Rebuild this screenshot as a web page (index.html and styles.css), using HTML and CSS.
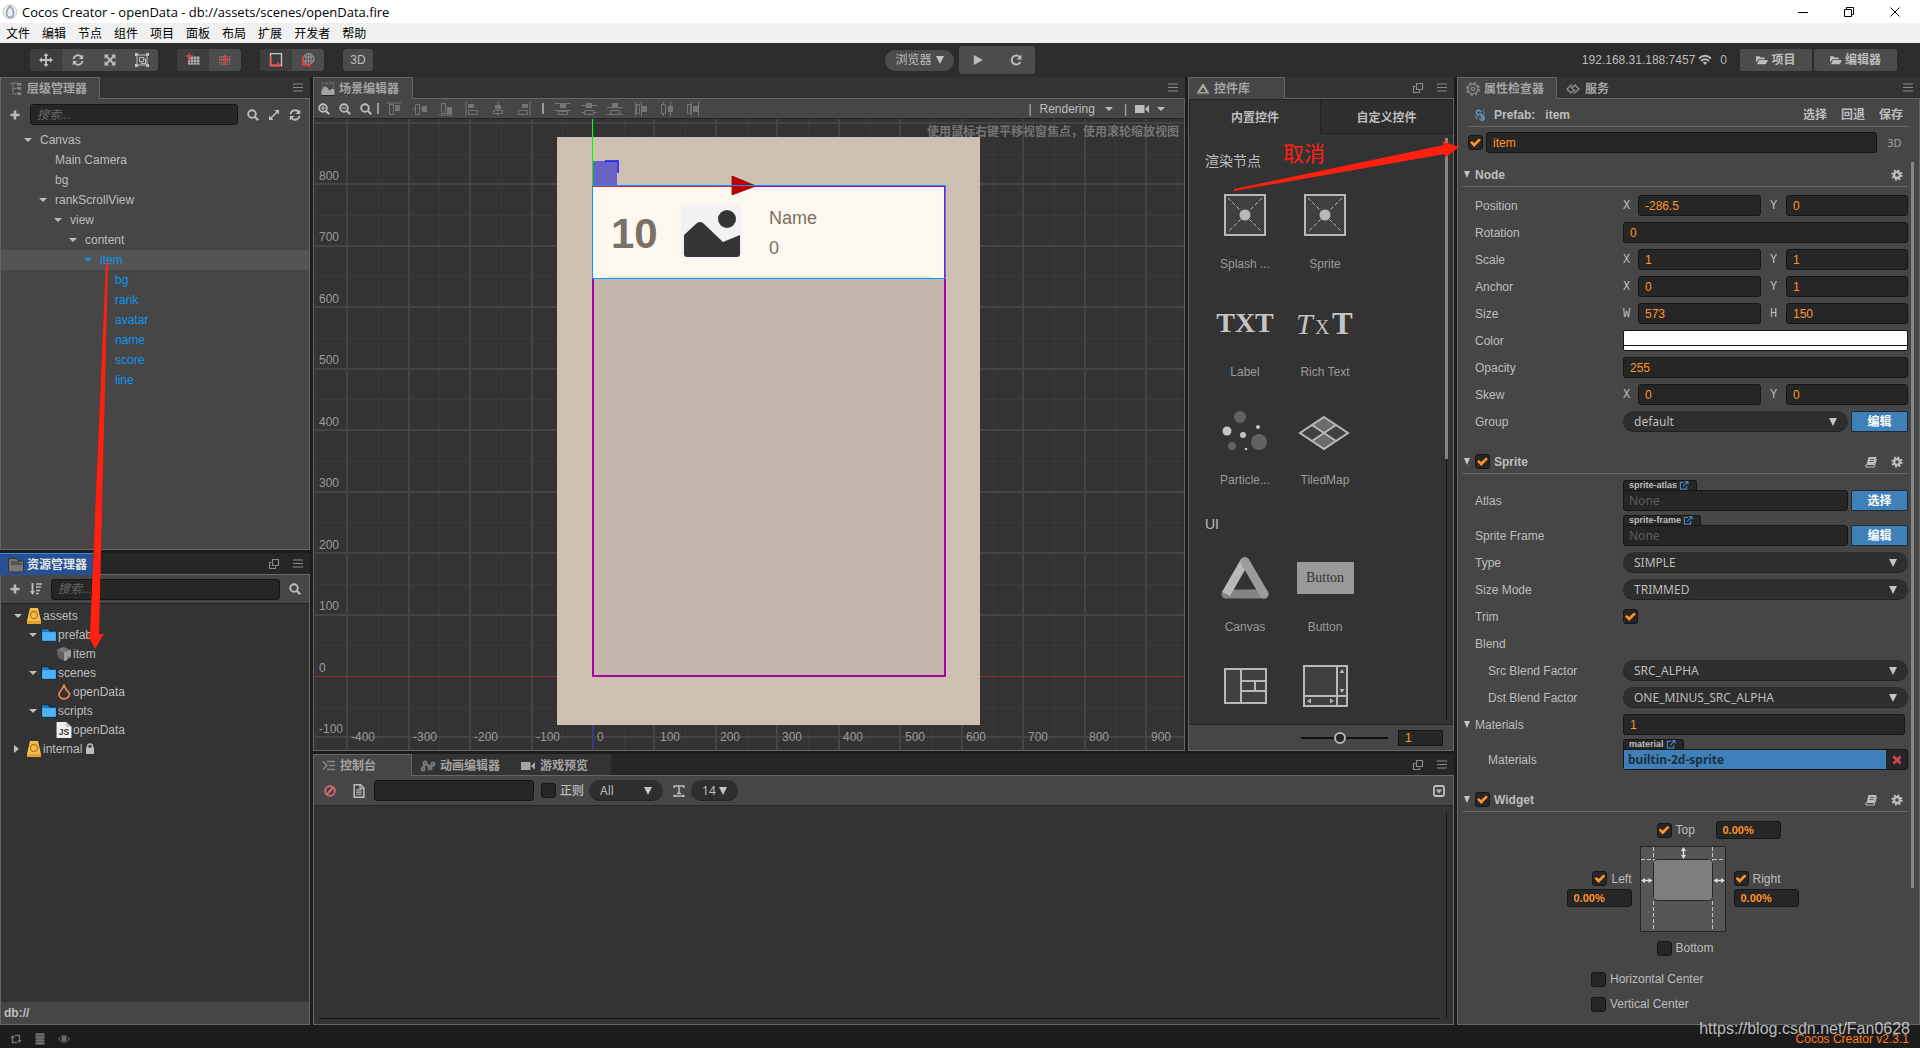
FILE: index.html
```html
<!DOCTYPE html>
<html lang="zh-CN">
<head>
<meta charset="utf-8">
<title>Cocos Creator - openData</title>
<link rel="stylesheet" href="styles.css">
</head>
<body>
<svg class="defs" aria-hidden="true">
  <symbol id="i-menu" viewBox="0 0 12 12"><path d="M1 2h10M1 5.500h10M1 9h10" stroke="currentColor" stroke-width="1"/></symbol>
  <symbol id="i-popout" viewBox="0 0 12 12"><path d="M4.500 1.500h6v6h-6zM3.500 4.500h-2v6h6v-2" fill="none" stroke="currentColor" stroke-width="1.200"/></symbol>
  <symbol id="i-plus" viewBox="0 0 12 12"><path d="M6 1.500v9M1.500 6h9" stroke="currentColor" stroke-width="2.600"/></symbol>
  <symbol id="i-search" viewBox="0 0 12 12"><circle cx="5" cy="5" r="3.800" fill="none" stroke="currentColor" stroke-width="1.900"/><path d="M8 8l3.200 3.200" stroke="currentColor" stroke-width="2.200"/></symbol>
  <symbol id="i-zoomin" viewBox="0 0 12 12"><use href="#i-search"/><path d="M3 5h4M5 3v4" stroke="currentColor" stroke-width="1.200"/></symbol>
  <symbol id="i-zoomout" viewBox="0 0 12 12"><use href="#i-search"/><path d="M3 5h4" stroke="currentColor" stroke-width="1.200"/></symbol>
  <symbol id="i-refresh" viewBox="0 0 12 12"><path d="M1.500 5.200A4.600 4.600 0 0 1 9.600 3M10.500 6.800A4.600 4.600 0 0 1 2.400 9" fill="none" stroke="currentColor" stroke-width="1.800"/><path d="M11.200.5v4.500h-4.500zM.8 11.500V7h4.500z" fill="currentColor"/></symbol>
  <symbol id="i-expand" viewBox="0 0 12 12"><path d="M3 9l6-6" stroke="currentColor" stroke-width="1.600"/><path d="M6.500 1H11v4.500zM1 6.500V11h4.500z" fill="currentColor"/></symbol>
  <symbol id="i-move" viewBox="0 0 12 12"><path d="M6 1.500v9M1.500 6h9" stroke="currentColor" stroke-width="1.600"/><path d="M6 0l2.300 2.600H3.700zM6 12L3.700 9.400h4.600zM0 6l2.600-2.300v4.600zM12 6L9.400 8.300V3.700z" fill="currentColor"/></symbol>
  <symbol id="i-arrows" viewBox="0 0 12 12"><path d="M2 2l8 8M10 2l-8 8" stroke="currentColor" stroke-width="2"/><path d="M.5.5H5L.5 5zM11.500.5V5L7 .5zM.5 11.500V7L5 11.500zM11.500 11.500H7L11.500 7z" fill="currentColor"/></symbol>
  <symbol id="i-rect" viewBox="0 0 14 14"><path d="M2 2h10v10H2z" fill="none" stroke="currentColor"/><path d="M4.500 4.500h4v4h-4zM9 6h1.500v4.500H6V9" fill="none" stroke="currentColor"/><path d="M0 0h3v3H0zM11 0h3v3h-3zM0 11h3v3H0zM11 11h3v3h-3z" fill="currentColor"/></symbol>
  <symbol id="i-anchor" viewBox="0 0 14 14"><path d="M3 5v6M6 3v8M9 3v8M12 3v8M2 5h12M2 8h12M2 11h12" stroke="#c4c4c4" stroke-width="1.200"/><path d="M3 0v8M0 3h7" stroke="#f0403c" stroke-width="1.400"/></symbol>
  <symbol id="i-center" viewBox="0 0 14 14"><path d="M2 3v9M5 3v9M9 3v9M12 3v9M1 4h12M1 7h12M1 10h12" stroke="#858585" stroke-width="1" stroke-dasharray="1 1"/><path d="M7 2v10M2 7h10" stroke="#f0403c" stroke-width="1.600"/></symbol>
  <symbol id="i-local" viewBox="0 0 14 14"><path d="M1.500.5h11v12h-11z" fill="none" stroke="#c4c4c4" stroke-width="1.400"/><path d="M2 3v9h8M8 9.500l3 2.500-3 2" fill="none" stroke="#f0403c" stroke-width="1.500"/></symbol>
  <symbol id="i-global" viewBox="0 0 14 14"><circle cx="7.500" cy="6" r="5.500" fill="none" stroke="#999"/><path d="M2 4h11M2 8h11M7.500.5v11M5 1v10M10 1v10" stroke="#999"/><path d="M2 4v8h6M1 5l2-2M7 10l2 2-2 2" fill="none" stroke="#f0403c" stroke-width="1.500"/></symbol>
  <symbol id="i-play" viewBox="0 0 12 12"><path d="M1 0l11 6-11 6z" fill="currentColor"/></symbol>
  <symbol id="i-reload" viewBox="0 0 12 12"><path d="M9.800 3.200A4.500 4.500 0 1 0 10.300 8" fill="none" stroke="currentColor" stroke-width="2"/><path d="M11.500.5v5h-5z" fill="currentColor"/></symbol>
  <symbol id="i-wifi" viewBox="0 0 14 12"><path d="M1 4.500q6-5.500 12 0M3 7q4-3.500 8 0" fill="none" stroke="currentColor" stroke-width="1.800"/><path d="M4.800 8.600q2.200-1.600 4.400 0L7 11z" fill="currentColor"/></symbol>
  <symbol id="i-folderopen" viewBox="0 0 14 12"><path d="M0 9V1.500h4L5 3h5v2H3zM3.500 6H14l-2.500 5H1z" fill="currentColor"/></symbol>
  <symbol id="i-tree" viewBox="0 0 14 16"><path d="M0 1.500h8M3.500 2v11.500h4M3.500 7.500h4M8 3.500h5M9 8.500h4M9 14.500h4" stroke="#777" stroke-width="1.400" fill="none"/><path d="M8 1h5v2H8zM8 6h5v2H8zM8 12h5v2H8z" fill="#8a8a8a"/></symbol>
  <symbol id="i-scene" viewBox="0 0 14 15"><path d="M0 0h3v3H0zM4 0h3v3H4zM8 0h3v3H8zM11.500 0H14v3h-2.500zM0 4h3v3H0zM11.500 4H14v3h-2.500z" fill="#606060"/><path d="M0 14V9q3-5 5-4t3.500 4.500Q11 6 14 8v6z" fill="#a4a4a4"/><path d="M0 14.500h14" stroke="#222"/></symbol>
  <symbol id="i-assets" viewBox="0 0 16 16"><path d="M.5 14V1.500H8L11 4h4.500v10q0 1-1 1h-13q-1 0-1-1z" fill="#777" stroke="#333"/><path d="M3 5h9M3 7h11" stroke="#333"/></symbol>
  <symbol id="i-tri" viewBox="0 0 12 11"><path d="M6 1.500L10.800 9.500H1.200z" fill="none" stroke="#a8a8a8" stroke-width="2.200" stroke-linejoin="round"/><path d="M1 10h10" stroke="#777" stroke-width="1.500"/></symbol>
  <symbol id="i-gear" viewBox="0 0 14 14"><circle cx="7" cy="7" r="5.400" fill="none" stroke="currentColor" stroke-width="2.400" stroke-dasharray="2.120 2.120"/><circle cx="7" cy="7" r="3.500" fill="none" stroke="currentColor" stroke-width="2.800"/></symbol>
  <symbol id="i-gearline" viewBox="0 0 14 14"><circle cx="7" cy="7" r="6" fill="none" stroke="#888" stroke-width="2" stroke-dasharray="2.350 2.360"/><circle cx="7" cy="7" r="4.800" fill="none" stroke="#888" stroke-width="1.300"/><circle cx="7" cy="7" r="1.700" fill="none" stroke="#888" stroke-width="1.300"/></symbol>
  <symbol id="i-service" viewBox="0 0 16 12"><path d="M7 1.500L2 6l4 4 3-3M9 10.500L14 6 10 2 7 5M6 4l4 4" fill="none" stroke="#8a8a8a" stroke-width="1.500"/></symbol>
  <symbol id="i-console" viewBox="0 0 14 12"><path d="M1 1.500l4 4-4 4" fill="none" stroke="#888" stroke-width="1.500"/><path d="M5 1.500h8M7 5.500h6M5 9.500h8" stroke="#888" stroke-width="1.600"/></symbol>
  <symbol id="i-anim" viewBox="0 0 16 12"><path d="M3 10L5 3l5 4 3-3" stroke="#777" stroke-width="2.500" fill="none"/><circle cx="5" cy="3" r="2.500" fill="#777"/><circle cx="3" cy="9" r="2.500" fill="#777"/><circle cx="10" cy="8" r="2.500" fill="#777"/><circle cx="13" cy="4" r="2.500" fill="#777"/><path d="M4.500 2.500h1v1h-1zM2.500 8.500h1v1h-1zM9.500 7.500h1v1h-1zM12.500 3.500h1v1h-1z" fill="#333"/></symbol>
  <symbol id="i-cam" viewBox="0 0 14 10"><path d="M0 1h9.500v8H0zM10 5l4-4v8z" fill="currentColor"/></symbol>
  <symbol id="i-sort" viewBox="0 0 12 12"><path d="M2.500 0v9" stroke="currentColor" stroke-width="1.800"/><path d="M0 8h5l-2.500 4z" fill="currentColor"/><path d="M6 1h6M6 4h5M6 7.500h4M6 10.500h2.500" stroke="currentColor" stroke-width="1.700"/></symbol>
  <symbol id="i-db" viewBox="0 0 14 16"><path d="M3 0h8l3 13H0z" fill="#f7bd4c"/><path d="M0 13h14v3H0z" fill="#e4a02f"/><circle cx="7" cy="7" r="3.500" fill="none" stroke="#b77a1c" stroke-width="1.300"/></symbol>
  <symbol id="i-folder" viewBox="0 0 14 12"><path d="M.5.5h6l1 2h6v9H.5z" fill="#1f7fc4" stroke="#1b2a38"/><path d="M1 3.500h12v7.500H1z" fill="#4db2fa"/></symbol>
  <symbol id="i-prefab" viewBox="0 0 14 14"><path d="M0 2.500L6.500 0 14 3v7l-6 4-7-4z" fill="#777"/><path d="M7 5.500L14 3v7l-3-1-1 4-3 1z" fill="#9c9c9c"/><path d="M0 3l7 2.500V14l-6-3.500z" fill="#5f5f5f"/></symbol>
  <symbol id="i-fire" viewBox="0 0 12 15"><path d="M6 1Q5 4 2.500 7T2.500 12.500Q6 15.500 9.500 12.500T9.500 7Q7 4 6 1z" fill="none" stroke="#e4824a" stroke-width="1.700"/></symbol>
  <symbol id="i-lock" viewBox="0 0 10 11"><path d="M1 4.500h8V11H1z" fill="currentColor"/><path d="M2.500 5V3.500a2.500 2.500 0 0 1 5 0V5" fill="none" stroke="currentColor" stroke-width="1.500"/></symbol>
  <symbol id="i-ban" viewBox="0 0 12 12"><path d="M9.200 2.800l-6.400 6.400" stroke="#e06a70" stroke-width="1.600"/><circle cx="6" cy="6" r="4.200" fill="none" stroke="#e06a70" stroke-width="1.500"/></symbol>
  <symbol id="i-doc" viewBox="0 0 12 13"><path d="M1.500.7H7.500l3 3v8.600h-9z" fill="none" stroke="currentColor" stroke-width="1.400"/><path d="M3.500 5.500h5M3.500 7.500h5M3.500 9.500h5M7 1v3h3" fill="none" stroke="currentColor" stroke-width="1.100"/></symbol>
  <symbol id="i-type" viewBox="0 0 12 12"><path d="M1.200 3V1h9.600v2M6 1v8M4 8.500h4M1 11h10M2.500 9.800L.8 11l1.700 1.200M9.500 9.800L11.200 11l-1.700 1.200" fill="none" stroke="currentColor" stroke-width="1.500"/></symbol>
  <symbol id="i-collapse" viewBox="0 0 12 12"><rect x="1" y="1" width="10" height="10" rx="1.500" fill="none" stroke="currentColor" stroke-width="1.800"/><path d="M3 4.500h6L6 8.500z" fill="currentColor"/></symbol>
  <symbol id="i-book" viewBox="0 0 12 12"><path d="M3.500 1H11.500L9 9H1.500z" fill="currentColor"/><path d="M1.200 8.500q-1 2.300.8 2.500H9l2.500-8" fill="none" stroke="currentColor" stroke-width="1.200"/><path d="M5 3.500h4M4.500 5.500h4" stroke="#464646" stroke-width=".8"/></symbol>
  <symbol id="i-link" viewBox="0 0 12 12"><path d="M5.500 4.500L8 7a1.800 1.800 0 0 0 2.500 2.500M5 7L3 5a2 2 0 0 1 0-3 2 2 0 0 1 3 0l1 1M7 5l2.500 2.500a2 2 0 0 1-3 3L5.500 9.500" fill="none" stroke="#5a9bd4" stroke-width="1.500"/><path d="M8.500 2.500l1.500-1.500M9 4h2M3.500 8.500L2 10M1 8h2" stroke="#5a9bd4"/></symbol>
  <symbol id="i-ext" viewBox="0 0 10 10"><path d="M5 1.500H1v7.500h7V5.500M4 6l4.500-4.500" fill="none" stroke="#3f86c4" stroke-width="1.200"/><path d="M5.500 0H10v4.500z" fill="#3f86c4"/></symbol>
  <symbol id="i-x" viewBox="0 0 10 10"><path d="M1.500 1.500l7 7M8.500 1.500l-7 7" stroke="#c8484c" stroke-width="2.800"/></symbol>
  <symbol id="i-sync" viewBox="0 0 12 10"><path d="M2.500 3v5.500h5M4.500 1.500h5V7" fill="none" stroke="currentColor" stroke-width="1.400"/><path d="M0 4l2.500-3L5 4zM7 6l2.500 3L12 6z" fill="currentColor"/></symbol>
  <symbol id="i-disks" viewBox="0 0 12 12"><path d="M2.500 1.500h7M2.500 4.500h7M2.500 7.500h7M2.500 10.500h7" stroke="currentColor" stroke-width="2.400" stroke-linecap="round"/></symbol>
  <symbol id="i-eye" viewBox="0 0 12 10"><path d="M.5 5Q6-2 11.500 5 6 12 .5 5z" fill="none" stroke="currentColor"/><circle cx="6" cy="4.800" r="2.500" fill="currentColor"/></symbol>
  <symbol id="a-v" viewBox="0 0 16 14"><path d="M1 1h14" stroke="currentColor"/><path d="M3.500 2.500h4v10h-4z" fill="none" stroke="currentColor"/><path d="M9 3h5v6H9z" fill="currentColor"/></symbol>
  <symbol id="a-vm" viewBox="0 0 16 14"><path d="M1 7h14" stroke="currentColor"/><path d="M3.500 2.500h4v10h-4z" fill="#464646" stroke="currentColor"/><path d="M10 4h5v6h-5z" fill="currentColor"/></symbol>
  <symbol id="a-vb" viewBox="0 0 16 14"><path d="M1 13h14" stroke="currentColor"/><path d="M3.500 1.500h4v10h-4z" fill="none" stroke="currentColor"/><path d="M9 5h5v7H9z" fill="currentColor"/></symbol>
  <symbol id="a-h" viewBox="0 0 16 14"><path d="M2 0v14" stroke="currentColor"/><path d="M4 2h6v4H4z" fill="currentColor"/><path d="M4.500 8.500h9v4h-9z" fill="none" stroke="currentColor"/></symbol>
  <symbol id="a-hm" viewBox="0 0 16 14"><path d="M8 0v14" stroke="currentColor"/><path d="M5 3h6v4H5z" fill="currentColor"/><path d="M3.500 8.500h9v3h-9z" fill="#464646" stroke="currentColor"/></symbol>
  <symbol id="a-dt" viewBox="0 0 16 14"><path d="M0 1.500h16M0 8.500h16" stroke="currentColor"/><path d="M5 2h6v4H5z" fill="currentColor"/><path d="M3.500 9.500h9v3h-9z" fill="none" stroke="currentColor"/></symbol>
  <symbol id="a-dm" viewBox="0 0 16 14"><path d="M0 3.500h16M0 10.500h16" stroke="currentColor"/><path d="M5 1h6v5H5z" fill="currentColor"/><path d="M3.500 8.500h9v4h-9z" fill="#464646" stroke="currentColor"/></symbol>
  <symbol id="a-db" viewBox="0 0 16 14"><path d="M0 5.500h16M0 12.500h16" stroke="currentColor"/><path d="M5 1h6v4H5z" fill="currentColor"/><path d="M3.500 8.500h9v4h-9z" fill="none" stroke="currentColor"/></symbol>
  <symbol id="a-el" viewBox="0 0 16 14"><path d="M2.500 0v14M8.500 0v14" stroke="currentColor"/><path d="M3.500 2.500h3v9h-3z" fill="none" stroke="currentColor"/><path d="M9 4h5v6H9z" fill="currentColor"/></symbol>
  <symbol id="a-em" viewBox="0 0 16 14"><path d="M4.500 0v14M11.500 0v14" stroke="currentColor"/><path d="M2.500 2.500h4v9h-4z" fill="#464646" stroke="currentColor"/><path d="M9 4h5v6H9z" fill="currentColor"/></symbol>
  <symbol id="a-er" viewBox="0 0 16 14"><path d="M6.500 0v14M13.500 0v14" stroke="currentColor"/><path d="M2.500 2.500h3v9h-3z" fill="none" stroke="currentColor"/><path d="M8 4h5v6H8z" fill="currentColor"/></symbol>
  <symbol id="w-sprite" viewBox="0 0 42 42"><path d="M1 1h40v40H1z" fill="#404040" stroke="#b8b8b8" stroke-width="2"/><path d="M4 4l34 34M38 4L4 38" stroke="#b8b8b8" stroke-dasharray="4 2"/><circle cx="21" cy="21" r="5.500" fill="#b8b8b8"/></symbol>
</svg>

<header class="titlebar">
  <svg class="app-icon" viewBox="0 0 16 16"><circle cx="8" cy="8" r="7" fill="#eee" stroke="#ccc"/><path d="M8 2Q4 7 4.500 10T8 13.500 11.500 10 8 2z" fill="none" stroke="#8aa0b8" stroke-width="1.500"/></svg>
  <span class="title">Cocos Creator - openData - db://assets/scenes/openData.fire</span>
  <svg class="win" viewBox="0 0 10 10"><path d="M0 5.500h10" stroke="#000"/></svg>
  <svg class="win" viewBox="0 0 10 10"><path d="M.5 2.500h7v7h-7zM2.500 2V.5h7v7H8" fill="none" stroke="#000"/></svg>
  <svg class="win" viewBox="0 0 10 10"><path d="M.5.500l9 9M9.500.5l-9 9" stroke="#000"/></svg>
</header>
<nav class="menubar"><a href="#">文件</a><a href="#">编辑</a><a href="#">节点</a><a href="#">组件</a><a href="#">项目</a><a href="#">面板</a><a href="#">布局</a><a href="#">扩展</a><a href="#">开发者</a><a href="#">帮助</a></nav>

<div class="toolbar">
  <div class="tools">
    <div class="btn-group">
      <button class="on" aria-label="移动"><svg class="ic14"><use href="#i-move"/></svg></button><button aria-label="旋转"><svg class="ic12"><use href="#i-refresh"/></svg></button><button aria-label="缩放"><svg class="ic12"><use href="#i-arrows"/></svg></button><button aria-label="矩形"><svg class="ic14"><use href="#i-rect"/></svg></button>
    </div>
    <div class="btn-group">
      <button class="on" aria-label="锚点"><svg class="ic14"><use href="#i-anchor"/></svg></button><button aria-label="中心"><svg class="ic14"><use href="#i-center"/></svg></button>
    </div>
    <div class="btn-group">
      <button class="on" aria-label="本地"><svg class="ic14"><use href="#i-local"/></svg></button><button aria-label="世界"><svg class="ic14"><use href="#i-global"/></svg></button>
    </div>
    <div class="btn-group"><button class="b3d">3D</button></div>
  </div>
  <div class="run">
    <button class="pill browser">浏览器 <i class="down"></i></button>
    <div class="playbox"><button aria-label="运行"><svg class="ic10"><use href="#i-play"/></svg></button><button aria-label="刷新"><svg class="ic12"><use href="#i-reload"/></svg></button></div>
  </div>
  <div class="net">
    <span>192.168.31.188:7457</span><svg class="ic14"><use href="#i-wifi"/></svg><span class="cnt">0</span>
    <button class="flat"><svg class="ic12"><use href="#i-folderopen"/></svg>项目</button><button class="flat wide"><svg class="ic12"><use href="#i-folderopen"/></svg>编辑器</button>
  </div>
</div>

<main class="workspace">
  <div class="col left">
    <section class="panel hierarchy">
      <div class="strip"><div class="tab active"><svg class="ic14"><use href="#i-tree"/></svg>层级管理器</div><span class="grow"></span><svg class="ic12"><use href="#i-menu"/></svg></div>
      <div class="body">
        <div class="bar hbar"><svg class="ic12"><use href="#i-plus"/></svg><input class="box search" placeholder="搜索..." aria-label="搜索节点"><svg class="ic12"><use href="#i-search"/></svg><svg class="ic12"><use href="#i-expand"/></svg><svg class="ic12"><use href="#i-refresh"/></svg></div>
        <ul class="tree nodes">
          <li class="l0"><i class="car"></i>Canvas</li>
          <li class="l1"><i></i>Main Camera</li>
          <li class="l1"><i></i>bg</li>
          <li class="l1"><i class="car"></i>rankScrollView</li>
          <li class="l2"><i class="car"></i>view</li>
          <li class="l3"><i class="car"></i>content</li>
          <li class="l4 pf sel"><i class="car"></i>item</li>
          <li class="l5 pf"><i></i>bg</li>
          <li class="l5 pf"><i></i>rank</li>
          <li class="l5 pf"><i></i>avatar</li>
          <li class="l5 pf"><i></i>name</li>
          <li class="l5 pf"><i></i>score</li>
          <li class="l5 pf"><i></i>line</li>
        </ul>
      </div>
    </section>
    <section class="panel assets">
      <div class="strip dark"><div class="tab focus"><svg class="ic16"><use href="#i-assets"/></svg>资源管理器</div><span class="grow"></span><svg class="ic12"><use href="#i-popout"/></svg><svg class="ic12"><use href="#i-menu"/></svg></div>
      <div class="body">
        <div class="bar abar"><svg class="ic12"><use href="#i-plus"/></svg><svg class="ic12"><use href="#i-sort"/></svg><input class="box search" placeholder="搜索..." aria-label="搜索资源"><svg class="ic12"><use href="#i-search"/></svg></div>
        <ul class="tree files">
          <li class="l0"><i class="car"></i><svg class="ic16"><use href="#i-db"/></svg>assets</li>
          <li class="l1"><i class="car"></i><svg class="ic14"><use href="#i-folder"/></svg>prefab</li>
          <li class="l2"><i></i><svg class="ic14"><use href="#i-prefab"/></svg>item</li>
          <li class="l1"><i class="car"></i><svg class="ic14"><use href="#i-folder"/></svg>scenes</li>
          <li class="l2"><i></i><svg class="ic16"><use href="#i-fire"/></svg>openData</li>
          <li class="l1"><i class="car"></i><svg class="ic14"><use href="#i-folder"/></svg>scripts</li>
          <li class="l2"><i></i><svg class="ic16" viewBox="0 0 14 15"><path d="M0 0h9l5 4.500V15H0z" fill="#eee"/><path d="M9 0v4.500h5z" fill="#bbb"/><text class="js" x="2" y="12">JS</text></svg>openData</li>
          <li class="l0"><i class="car right"></i><svg class="ic16"><use href="#i-db"/></svg>internal<svg class="lock"><use href="#i-lock"/></svg></li>
        </ul>
        <div class="path">db://</div>
      </div>
    </section>
  </div>

  <div class="col middle">
    <div class="upper">
      <section class="panel scene">
        <div class="strip"><div class="tab active"><svg class="ic14"><use href="#i-scene"/></svg>场景编辑器</div><span class="grow"></span><svg class="ic12"><use href="#i-menu"/></svg></div>
        <div class="body">
          <div class="scenebar">
            <div class="zooms"><svg class="ic12"><use href="#i-zoomin"/></svg><svg class="ic12"><use href="#i-zoomout"/></svg><svg class="ic12"><use href="#i-search"/></svg></div><b class="sep"></b>
            <div class="aligns"><svg><use href="#a-v"/></svg><svg><use href="#a-vm"/></svg><svg><use href="#a-vb"/></svg><svg><use href="#a-h"/></svg><svg><use href="#a-hm"/></svg><svg class="flip"><use href="#a-h"/></svg></div><b class="sep"></b>
            <div class="aligns"><svg><use href="#a-dt"/></svg><svg><use href="#a-dm"/></svg><svg><use href="#a-db"/></svg><svg><use href="#a-el"/></svg><svg><use href="#a-em"/></svg><svg><use href="#a-er"/></svg></div>
            <span class="grow"></span>
            <div class="rendering"><span>|</span><span>Rendering</span><i class="car"></i><span>|</span><svg class="ic14"><use href="#i-cam"/></svg><i class="car"></i></div>
          </div>
          <div class="view">
            <svg class="stage">
              <g transform="translate(279 557)">
                <g fill="none" stroke-width="2" shape-rendering="crispEdges">
                  <path stroke="#3a3a3a" stroke-width="1" d="M-277-557V2000M-215-557V2000M-154-557V2000M-92-557V2000M-31-557V2000M31-557V2000M92-557V2000M154-557V2000M215-557V2000M277-557V2000M338-557V2000M400-557V2000M461-557V2000M522-557V2000M584-557V2000M-279-522H2000M-279-461H2000M-279-400H2000M-279-338H2000M-279-277H2000M-279-215H2000M-279-154H2000M-279-92H2000M-279-31H2000M-279 31H2000"/>
                  <path stroke="#444" d="M-246-557V2000M-184-557V2000M-123-557V2000M-61-557V2000M0-557V2000M61-557V2000M123-557V2000M184-557V2000M246-557V2000M307-557V2000M369-557V2000M430-557V2000M492-557V2000M553-557V2000M-279-553H2000M-279-492H2000M-279-430H2000M-279-369H2000M-279-307H2000M-279-246H2000M-279-184H2000M-279-123H2000M-279-61H2000M-279 61H2000"/>
                  <path stroke="#8f2f2f" stroke-width="1" d="M-279 0H2000"/>
                  <path stroke="#3030b4" stroke-width="1" d="M0 0V2000"/>
                </g>
                <rect x="-36" y="-539" width="423" height="588" fill="#cdc0b2"/>
                <rect x="0" y="-490" width="352" height="490" fill="#c3b6aa" stroke="#aa00aa" stroke-width="2"/>
                <rect x="0" y="-491" width="352" height="93" fill="#fcf8ef"/>
                <path d="M14-399H338" stroke="#ece5d9" stroke-width="2"/>
                <path d="M351.500-490V-398M150-489.500H352" stroke="#c000a8"/>
                <path d="M0-489.500H145" stroke="#e8203c"/>
                <rect x="0" y="-515" width="24" height="24" fill="#6a62c4"/>
                <path d="M12-515H25V-503" fill="none" stroke="#1414f0" stroke-width="1.500"/>
                <path d="M139-500L163-490 139-481z" fill="#c00000" stroke="#700" stroke-width=".7"/>
                <path d="M-.5-557V-491" stroke="#0f0"/>
                <rect x="-.5" y="-490.500" width="353" height="93" fill="none" stroke="#0b96ff"/>
                <text class="rank" x="18" y="-428">10</text>
                <rect x="88" y="-471" width="61" height="54" rx="3" fill="#f2f2f2"/>
                <path d="M91-441L104-453q3-2 6 0L130-434 147-441V-422q0 3-3 3H94q-3 0-3-3z" fill="#353535"/>
                <circle cx="134" cy="-457" r="9" fill="#353535"/>
                <text class="nm" x="176" y="-452">Name</text>
                <text class="nm" x="176" y="-422">0</text>
                <g class="ruler">
                  <text x="-274" y="-496">800</text><text x="-274" y="-435">700</text><text x="-274" y="-373">600</text><text x="-274" y="-312">500</text><text x="-274" y="-250">400</text><text x="-274" y="-189">300</text><text x="-274" y="-127">200</text><text x="-274" y="-66">100</text><text x="-274" y="-4">0</text><text x="-274" y="57">-100</text>
                  <text x="-242" y="65">-400</text><text x="-180" y="65">-300</text><text x="-119" y="65">-200</text><text x="-57" y="65">-100</text><text x="4" y="65">0</text><text x="67" y="65">100</text><text x="127" y="65">200</text><text x="189" y="65">300</text><text x="250" y="65">400</text><text x="312" y="65">500</text><text x="373" y="65">600</text><text x="435" y="65">700</text><text x="496" y="65">800</text><text x="558" y="65">900</text>
                </g>
              </g>
            </svg>
            <p class="hint">使用鼠标右键平移视窗焦点，使用滚轮缩放视图</p>
          </div>
        </div>
      </section>

      <section class="panel library">
        <div class="strip"><div class="tab active"><svg class="ic12"><use href="#i-tri"/></svg>控件库</div><span class="grow"></span><svg class="ic12"><use href="#i-popout"/></svg><svg class="ic12"><use href="#i-menu"/></svg></div>
        <div class="body">
          <div class="libtabs"><button class="cur">内置控件</button><button>自定义控件</button></div>
          <div class="liblist">
            <h2>渲染节点</h2>
            <ul class="widgets">
              <li><svg viewBox="0 0 60 60"><use href="#w-sprite" x="9" y="9" width="42" height="42"/></svg>Splash ...</li>
              <li><svg viewBox="0 0 60 60"><use href="#w-sprite" x="9" y="9" width="42" height="42"/></svg>Sprite</li>
              <li><svg viewBox="0 0 60 60"><text class="txt" x="30" y="39" text-anchor="middle" font-size="28" font-weight="700">TXT</text></svg>Label</li>
              <li><svg viewBox="0 0 60 60"><text class="txt" y="41" font-size="30"><tspan x="1" font-style="italic">T</tspan><tspan x="20" font-size="20">X</tspan><tspan x="37" font-weight="700" font-size="31">T</tspan></text></svg>Rich Text</li>
              <li><svg viewBox="0 0 60 60"><circle cx="25" cy="16" r="6" fill="#626262"/><circle cx="44" cy="41" r="8" fill="#626262"/><circle cx="17" cy="45" r="4" fill="#626262"/><circle cx="12" cy="30" r="4.500" fill="#c4c4c4"/><circle cx="28" cy="34" r="3" fill="#c4c4c4"/><circle cx="43" cy="26" r="2" fill="#c4c4c4"/><circle cx="31" cy="48" r="1.300" fill="#c4c4c4"/></svg>Particle...</li>
              <li><svg viewBox="0 0 60 60"><path d="M29 16L53 32 29 48 5 32z" fill="#404040"/><path d="M29 16L41 24 29 32 17 24zM29 32l12 8-12 8-12-8z" fill="#6c6c6c"/><path d="M29 16L53 32 29 48 5 32zM17 24l24 16M41 24L17 40" fill="none" stroke="#b8b8b8" stroke-width="2"/></svg>TiledMap</li>
            </ul>
            <h2>UI</h2>
            <ul class="widgets">
              <li><svg viewBox="0 0 60 60"><path d="M11 46H49" stroke="#848484" stroke-width="9" stroke-linecap="round"/><path d="M11 46L30 13" stroke="#b8b8b8" stroke-width="9"/><path d="M30 13.500L49 46" stroke="#9c9c9c" stroke-width="9" stroke-linecap="round"/></svg>Canvas</li>
              <li><svg viewBox="0 0 60 60"><rect x="2" y="14" width="57" height="32" rx="1" fill="#999"/><text class="btntxt" x="30" y="34" text-anchor="middle">Button</text></svg>Button</li>
              <li><svg viewBox="0 0 60 60"><path d="M10 13h41v34H10zM26 13v34M26 25h25M26 35h25M40 25v10" fill="#404040" stroke="#b8b8b8" stroke-width="2"/></svg></li>
              <li><svg viewBox="0 0 60 60"><path d="M9 10h43v40H9zM42 10v40M9 40h43" fill="#404040" stroke="#b8b8b8" stroke-width="2"/><path d="M47 13l2.500 4h-5zM47 37l-2.500-4h5zM12 45l4-2.500v5zM39 45l-4 2.500v-5z" fill="#b8b8b8"/></svg></li>
            </ul>
            <span class="track"></span><span class="thumb"></span>
          </div>
          <div class="libfoot"><input type="range" min="0" max="100" value="44" aria-label="缩放"><input class="box num" value="1" aria-label="缩放值"></div>
        </div>
      </section>
    </div>

    <section class="panel console">
      <div class="strip dark"><div class="tab active"><svg class="ic14"><use href="#i-console"/></svg>控制台</div><div class="tab"><svg class="ic16"><use href="#i-anim"/></svg>动画编辑器</div><div class="tab last"><svg class="ic14"><use href="#i-cam"/></svg>游戏预览</div><span class="grow"></span><svg class="ic12"><use href="#i-popout"/></svg><svg class="ic12"><use href="#i-menu"/></svg></div>
      <div class="body">
        <div class="bar cbar"><svg class="ic14"><use href="#i-ban"/></svg><svg class="ic14"><use href="#i-doc"/></svg><input class="box" aria-label="过滤"><label class="chk"><input type="checkbox"><b>正则</b></label><span class="select all"><select aria-label="级别"><option>All</option></select></span><svg class="ic12"><use href="#i-type"/></svg><span class="select size"><select aria-label="字号"><option>14</option></select></span><span class="grow"></span><svg class="ic12"><use href="#i-collapse"/></svg></div>
        <div class="log"></div>
        <span class="track"></span>
      </div>
    </section>
  </div>

  <section class="panel inspector">
    <div class="strip"><div class="tab active"><svg class="ic14"><use href="#i-gearline"/></svg>属性检查器</div><div class="tab"><svg class="ic16"><use href="#i-service"/></svg>服务</div><span class="grow"></span><svg class="ic12"><use href="#i-menu"/></svg></div>
    <div class="body">
      <div class="prefab"><svg class="ic12"><use href="#i-link"/></svg><b>Prefab:</b><b class="pname">item</b><span class="grow"></span><button>选择</button><button>回退</button><button>保存</button></div>
      <div class="nodename"><input type="checkbox" checked aria-label="启用"><input class="box" value="item" aria-label="节点名"><span class="d3">3D</span></div>

      <div class="head node"><i class="down"></i><b>Node</b><span class="grow"></span><svg class="ic12"><use href="#i-gear"/></svg></div>
      <div class="rows">
        <div class="row"><span>Position</span><div class="xy"><label for="px">X</label><input id="px" class="box" value="-286.5"><label for="py">Y</label><input id="py" class="box" value="0"></div></div>
        <div class="row"><label for="rot">Rotation</label><input id="rot" class="box" value="0"></div>
        <div class="row"><span>Scale</span><div class="xy"><label for="sx">X</label><input id="sx" class="box" value="1"><label for="sy">Y</label><input id="sy" class="box" value="1"></div></div>
        <div class="row"><span>Anchor</span><div class="xy"><label for="ax">X</label><input id="ax" class="box" value="0"><label for="ay">Y</label><input id="ay" class="box" value="1"></div></div>
        <div class="row"><span>Size</span><div class="xy"><label for="sw">W</label><input id="sw" class="box" value="573"><label for="sh">H</label><input id="sh" class="box" value="150"></div></div>
        <div class="row"><span>Color</span><button class="color" aria-label="Color"></button></div>
        <div class="row"><label for="op">Opacity</label><input id="op" class="box" value="255"></div>
        <div class="row"><span>Skew</span><div class="xy"><label for="kx">X</label><input id="kx" class="box" value="0"><label for="ky">Y</label><input id="ky" class="box" value="0"></div></div>
        <div class="row"><label for="grp">Group</label><div class="pair"><span class="select"><select id="grp"><option>default</option></select></span><button class="blue">编辑</button></div></div>
      </div>

      <div class="head"><i class="down"></i><input type="checkbox" checked aria-label="Sprite"><b>Sprite</b><span class="grow"></span><svg class="ic12"><use href="#i-book"/></svg><svg class="ic12"><use href="#i-gear"/></svg></div>
      <div class="rows">
        <div class="row tall"><span>Atlas</span><div class="pair"><div class="asset"><span class="kind">sprite-atlas<svg><use href="#i-ext"/></svg></span><div class="slot">None</div></div><button class="blue">选择</button></div></div>
        <div class="row tall"><span>Sprite Frame</span><div class="pair"><div class="asset"><span class="kind">sprite-frame<svg><use href="#i-ext"/></svg></span><div class="slot">None</div></div><button class="blue">编辑</button></div></div>
        <div class="row"><label for="ty">Type</label><span class="select"><select id="ty"><option>SIMPLE</option></select></span></div>
        <div class="row"><label for="sm">Size Mode</label><span class="select"><select id="sm"><option>TRIMMED</option></select></span></div>
        <div class="row"><label for="tr">Trim</label><input id="tr" type="checkbox" checked></div>
        <div class="row"><span>Blend</span></div>
        <div class="row sub"><label for="sb">Src Blend Factor</label><span class="select"><select id="sb"><option>SRC_ALPHA</option></select></span></div>
        <div class="row sub"><label for="ds">Dst Blend Factor</label><span class="select"><select id="ds"><option>ONE_MINUS_SRC_ALPHA</option></select></span></div>
        <div class="row fold"><label for="mt"><i class="down"></i>Materials</label><input id="mt" class="box" value="1"></div>
        <div class="row tall sub"><span>Materials</span><div class="asset"><span class="kind">material<svg><use href="#i-ext"/></svg></span><div class="slot full"><span>builtin-2d-sprite</span><button aria-label="移除"><svg class="ic10"><use href="#i-x"/></svg></button></div></div></div>
      </div>

      <div class="head"><i class="down"></i><input type="checkbox" checked aria-label="Widget"><b>Widget</b><span class="grow"></span><svg class="ic12"><use href="#i-book"/></svg><svg class="ic12"><use href="#i-gear"/></svg></div>
      <div class="widget">
        <div class="wtop"><label class="chk"><input type="checkbox" checked>Top</label><input class="box pct" value="0.00%" aria-label="Top"></div>
        <div class="wside wl"><label class="chk"><input type="checkbox" checked>Left</label><input class="box pct" value="0.00%" aria-label="Left"></div>
        <svg class="wbox" viewBox="0 0 86 86"><path d="M.5.5h85v85H.5z" fill="#565656" stroke="#262626"/><path d="M13.500 1v84M72.500 1v84M1 13.500h84" stroke="#c4c4c4" stroke-dasharray="4 2"/><rect x="13.500" y="13.500" width="59" height="41" rx="3" fill="#7e7e7e" stroke="#262626"/><path d="M43.500 3v8M3 34.500h8M75 34.500h8" stroke="#ddd" stroke-width="1.500"/><path d="M43.500 1l2.500 4h-5zM43.500 13L41 9h5zM1 34.500L5 32v5zM12.500 34.500l-4 2.500v-5zM73.500 34.500l4-2.500v5zM85 34.500L81 37v-5z" fill="#ddd"/></svg>
        <div class="wside"><label class="chk"><input type="checkbox" checked>Right</label><input class="box pct" value="0.00%" aria-label="Right"></div>
        <label class="chk wbottom"><input type="checkbox">Bottom</label>
        <div class="wcenter"><label class="chk"><input type="checkbox">Horizontal Center</label><label class="chk"><input type="checkbox">Vertical Center</label></div>
      </div>
      <span class="thumb"></span>
    </div>
  </section>
</main>

<footer class="status"><svg class="ic12"><use href="#i-sync"/></svg><svg class="ic12"><use href="#i-disks"/></svg><svg class="ic12"><use href="#i-eye"/></svg><span class="grow"></span><span class="ver">Cocos Creator v2.3.1</span></footer>
<span class="watermark">https://blog.csdn.net/Fan0628</span>

<svg class="marks" aria-hidden="true">
  <path d="M106 262h2L99 634h5L95 649 88 635l2-1z"/>
  <path d="M1234 189L1444 145 1442 141 1459 147 1445 158 1445 154 1234 191z"/>
  <text x="1283" y="161">取消</text>
</svg>
</body>
</html>
```
FILE: styles.css
```css
* { box-sizing: border-box; }
html, body { height: 100%; margin: 0; }
body {
  display: flex; flex-direction: column; position: relative; overflow: hidden;
  background: #1c1c1c; color: #bdbdbd;
  font: 12px/16px "Liberation Sans", "Noto Sans CJK SC", sans-serif;
}
ul, h2, p { margin: 0; padding: 0; list-style: none; font-weight: 400; }
button, input, select { font: inherit; color: inherit; margin: 0; }
button { border: 0; padding: 0; background: none; display: flex; align-items: center; justify-content: center; }
svg { flex: none; display: block; }
.defs { position: absolute; width: 0; height: 0; }
.grow { flex: 1; }
.ic10 { width: 10px; height: 10px; }
.ic12 { width: 12px; height: 12px; }
.ic14 { width: 14px; height: 14px; }
.ic16 { width: 16px; height: 16px; }
.down { flex: none; width: 0; height: 0; border: 4px solid transparent; border-top: 8px solid #c4c4c4; border-bottom: 0; }
.car { flex: none; width: 0; height: 0; border: 4px solid transparent; border-top: 4px solid currentColor; border-bottom: 0; }

/* window chrome */
.titlebar { flex: none; height: 23px; background: #fff; color: #000; display: flex; align-items: center; padding: 0 20px 0 2px; font-family: "Open Sans", sans-serif; font-size: 13px; }
.app-icon { width: 16px; height: 16px; margin-right: 4px; }
.title { flex: 1; }
.win { width: 10px; height: 10px; margin-left: 36px; }
.menubar { flex: none; height: 20px; background: #f0f0f0; display: flex; align-items: center; gap: 12px; padding: 1px 0 0 6px; }
.menubar a { color: #000; text-decoration: none; }

.toolbar { flex: none; height: 34px; background: #2c2c2c; display: grid; grid-template-columns: 1fr auto 1fr; align-items: center; }
.tools { display: flex; gap: 19px; padding-left: 30px; }
.btn-group { display: flex; height: 22px; border-radius: 3px; overflow: hidden; background: #4c4c4c; }
.btn-group button { width: 32px; }
.btn-group .on { background: #3e3e3e; }
.btn-group .b3d { width: 30px; }
.run { display: flex; align-items: center; gap: 5px; }
.pill { height: 21px; border-radius: 11px; background: #4c4c4c; }
.browser { width: 69px; gap: 4px; }
.playbox { display: flex; height: 28px; background: #4c4c4c; border-radius: 3px; }
.playbox button { width: 38px; }
.net { display: flex; align-items: center; justify-content: flex-end; padding-right: 23px; }
.net .ic14 { margin: 0 8px 0 3px; }
.cnt { margin-right: 13px; }
.flat { width: 72px; height: 22px; background: #4c4c4c; border-radius: 2px; gap: 3px; font-weight: 700; }
.flat.wide { width: 83px; margin-left: 2px; }

/* panels */
.workspace { flex: 1; min-height: 0; display: grid; grid-template-columns: 310px minmax(0, 1fr) 463px; gap: 3px; }
.col { display: flex; flex-direction: column; gap: 3px; min-height: 0; }
.panel { display: flex; flex-direction: column; min-height: 0; min-width: 0; }
.hierarchy { flex: 473 1 0; }
.assets { flex: 472 1 0; }
.upper { flex: 674 1 0; display: grid; grid-template-columns: minmax(0, 1fr) 266px; gap: 3px; min-height: 0; }
.console { flex: 271 1 0; }
.strip { flex: none; height: 22px; background: #333; border-bottom: 1px solid #666; display: flex; align-items: center; padding-right: 6px; color: #8a8a8a; }
.strip > svg { margin-left: 12px; }
.strip.dark { background: #262626; }
.tab { height: 21px; display: flex; align-items: center; gap: 4px; padding: 2px 12px 0 8px; background: #333; color: #a4a4a4; font-weight: 700; }
.tab.active { height: 22px; align-self: flex-start; background: #464646; border: 1px solid #666; border-bottom: 0; padding-top: 1px; }
.tab.focus { height: 22px; align-self: flex-start; background: #264f94; color: #e4e4e4; border-top: 1px solid #2f8ee0; padding: 1px 6px 0 8px; gap: 3px; }
.scene .tab { padding-left: 7px; padding-right: 13px; }
.library .tab { padding-right: 34px; gap: 5px; }
.console .tab.active { padding-right: 35px; }
.console .tab + .tab { padding-right: 13px; }
.console .tab.last { padding-right: 23px; gap: 5px; }
.body { flex: 1; min-height: 0; display: flex; flex-direction: column; position: relative; background: #464646; border: 1px solid #666; border-top: 0; }
.bar { flex: none; display: flex; align-items: center; gap: 9px; }
.hbar { height: 31px; padding: 0 8px 0 8px; }
.abar { height: 29px; padding: 0 8px 0 8px; border-bottom: 1px solid #222; }
.box { flex: 1; min-width: 0; width: 100%; height: 21px; background: #262626; border: 1px solid #161616; border-radius: 3px; padding: 0 6px; color: #fd942b; outline: 0; }
.search::placeholder { color: #666; font-style: italic; }

/* trees */
.tree { flex: 1; }
.tree li { display: flex; align-items: center; height: 20px; }
.nodes i { width: 8px; margin-right: 8px; }
.nodes .l0 { padding-left: 23px; }
.nodes .l1 { padding-left: 38px; }
.nodes .l2 { padding-left: 53px; }
.nodes .l3 { padding-left: 68px; }
.nodes .l4 { padding-left: 83px; }
.nodes .l5 { padding-left: 98px; }
.nodes .pf { color: #0f94ee; }
.nodes .sel { background: #545454; }
.files { background: #333; padding-top: 2px; }
.files li { height: 19px; }
.files i { width: 8px; margin-right: 4px; }
.files li svg { width: 16px; margin-right: 1px; }
.files .l0 { padding-left: 13px; }
.files .l1 { padding-left: 28px; }
.files .l2 { padding-left: 43px; }
.files .right { border: 4px solid transparent; border-left: 5px solid currentColor; border-right: 0; }
.files li .lock { width: 10px; height: 11px; margin-left: 3px; }
.js { font-size: 8px; font-weight: 700; fill: #333; }
.path { height: 22px; padding: 3px; font-weight: 700; }

/* scene editor */
.scenebar { flex: none; height: 20px; display: flex; align-items: center; padding: 0 16px 0 4px; border-bottom: 1px solid #262626; }
.zooms { display: flex; gap: 9px; }
.sep { width: 2px; height: 11px; background: #9a9a9a; margin: 0 5px; }
.aligns { display: flex; gap: 10px; color: #747474; margin: 0 5px 0 2px; }
.aligns svg { width: 16px; height: 14px; }
.sep + .aligns + .sep + .aligns { margin-left: 6px; }
.flip { transform: scaleX(-1); }
.rendering { display: flex; align-items: center; gap: 8px; }
.rendering .car { margin: 0 3px 0 2px; }
.rendering .ic14 + .car { margin-left: 0; }
.view { flex: 1; min-height: 0; position: relative; background: #333; }
.stage { position: absolute; width: 100%; height: 100%; }
.rank { font-size: 42px; font-weight: 700; fill: #7b7065; }
.nm { font-size: 18px; fill: #7b7065; }
.ruler { fill: #9a9a9a; }
.hint { position: absolute; top: 5px; right: 5px; color: #757575; font-weight: 700; }

/* widget library */
.libtabs { flex: none; display: grid; grid-template-columns: 131px 1fr; height: 35px; background: #333; }
.libtabs button { border: 1px solid #222; background: #2e2e2e; font-weight: 700; padding-top: 2px; }
.libtabs .cur { background: #333; border-bottom: 0; border-right: 0; }
.liblist { flex: 1; min-height: 0; overflow: hidden; position: relative; background: #333; border-bottom: 1px solid #222; padding: 19px 16px 0; }
.liblist h2 { font-size: 14px; line-height: 16px; }
.widgets { display: grid; grid-template-columns: 80px 80px; color: #9a9a9a; padding-top: 16px; }
.widgets li { height: 108px; display: flex; flex-direction: column; align-items: center; gap: 11px; }
.widgets svg { width: 60px; height: 60px; }
.widgets + h2 { margin-top: 7px; }
.txt { font-family: "Liberation Serif", serif; fill: #c4c4c4; }
.btntxt { font-family: "Liberation Serif", serif; font-size: 14px; fill: #333; }
.thumb, .track { position: absolute; top: 4px; right: 5px; width: 3px; height: 321px; background: #868686; }
.track { right: 6px; width: 1px; height: auto; bottom: 4px; background: #161616; }
.console .track { top: 36px; bottom: 6px; }
.inspector .thumb { top: 63px; bottom: 136px; height: auto; right: 5px; }
.libfoot { flex: none; height: 25px; display: flex; align-items: center; justify-content: flex-end; gap: 10px; padding-right: 10px; }
.libfoot input[type=range] { appearance: none; width: 87px; height: 12px; margin: 0; background: linear-gradient(#111, #111) center / 100% 2px no-repeat; }
.libfoot input[type=range]::-webkit-slider-thumb { appearance: none; width: 12px; height: 12px; border: 2px solid #b4b4b4; border-radius: 50%; background: #262626; }
.libfoot .num { flex: none; width: 45px; height: 16px; border-radius: 0; }

/* form controls */
input[type=checkbox] { appearance: none; flex: none; width: 15px; height: 15px; background: #262626; border: 1px solid #161616; border-radius: 3px; display: grid; place-items: center; }
input[type=checkbox]:checked::after { content: ""; width: 11px; height: 9px; background: #fd942b; clip-path: polygon(0 50%, 18% 32%, 38% 55%, 82% 5%, 100% 22%, 38% 100%); }
.chk { display: flex; align-items: center; gap: 4px; }
.select { display: flex; align-items: center; position: relative; height: 21px; flex: 1; }
.select select { appearance: none; width: 100%; height: 21px; border: 0; border-bottom: 1px solid #222; border-radius: 11px; background: #2e2e2e; padding: 1px 11px 0; font-family: "Noto Sans", sans-serif; }
.select::after { content: ""; position: absolute; right: 11px; border: 4px solid transparent; border-top: 8px solid #c4c4c4; border-bottom: 0; }
.blue { width: 57px; height: 21px; background: #3f80b8; border: 1px solid #1a2a38; border-radius: 2px; color: #fff; font-weight: 700; }

/* console */
.cbar { height: 30px; padding: 0 8px 0 9px; gap: 0; background: #464646; border-bottom: 1px solid #262626; }
.cbar .ic14:first-child { margin-right: 15px; }
.cbar .box { flex: none; width: 160px; margin: 0 7px 0 8px; }
.cbar .select { flex: none; }
.cbar .chk b { font-weight: 500; }
.cbar .all { width: 74px; margin: 0 10px 0 5px; }
.cbar .size { width: 47px; margin-left: 6px; }
.log { flex: 1; background: #333; border-bottom: 1px solid #111; margin: 0 14px 5px 5px; }
.console .body { background: #333; }

/* inspector */
.prefab { flex: none; height: 28px; margin: 0 10px; padding: 4px 6px 0; border-bottom: 1px solid #666; display: flex; align-items: center; }
.prefab .ic12 { margin-right: 8px; }
.prefab .pname { margin-left: 10px; }
.prefab button { font-weight: 700; margin-left: 14px; }
.nodename { flex: none; height: 31px; display: flex; align-items: center; gap: 3px; padding: 0 10px; }
.d3 { width: 29px; text-align: center; font: 11px/16px "Noto Sans", sans-serif; color: #a4a4a4; }
.head { flex: none; height: 22px; margin: 16px 11px 0 4px; padding: 0 5px 2px 2px; border-bottom: 1px solid #666; display: flex; align-items: center; gap: 4px; }
.head.node { margin-top: 7px; }
.head .ic12 { margin-left: 10px; }
.head .down, .fold .down { border-width: 7px 3px 0; margin-right: 1px; }
.rows { flex: none; padding: 5px 11px 1px 17px; }
.row { display: grid; grid-template-columns: 148px 1fr; align-items: center; height: 27px; }
.sub > :first-child { padding-left: 13px; }
.tall { height: 35px; padding: 1px 0 3px; align-items: end; }
.tall > span { line-height: 20px; }
.xy { display: grid; grid-template-columns: 15px 123px 25px 1fr; align-items: center; }
.xy label { font-family: "Liberation Mono", monospace; }
.xy label + input + label { text-align: center; }
.color { height: 21px; border: 1px solid #161616; border-radius: 2px; background: linear-gradient(#161616, #161616) 0 14px / 100% 1px no-repeat #fff; }
.pair { display: flex; gap: 3px; align-items: flex-end; }
.asset { flex: 1; display: flex; flex-direction: column; align-items: flex-start; }
.kind { display: flex; align-items: center; gap: 2px; height: 10px; padding: 0 7px 0 5px; background: #262626; border-radius: 3px 3px 0 0; border: 1px solid #161616; border-bottom: 0; font-size: 9px; line-height: 9px; font-weight: 700; }
.kind svg { width: 10px; height: 9px; }
.slot { width: 100%; height: 21px; padding-left: 5px; background: #262626; border: 1px solid #161616; border-radius: 0 3px 3px 3px; line-height: 20px; color: #5c5c5c; font-family: "Noto Sans", sans-serif; }
.slot.full { display: flex; padding: 0; font-weight: 700; color: #1d2f40; }
.slot.full span { flex: 1; background: #3f80b8; padding-left: 4px; }
.slot.full button { width: 21px; }
.fold label { display: flex; align-items: center; gap: 4px; margin-left: -11px; }
.fold .box { margin-right: 3px; width: auto; }
.widget { display: grid; grid-template-columns: 1fr 86px 1fr; column-gap: 8px; margin: 9px 16px 0 4px; align-items: center; }
.wtop { grid-column: 2 / 4; padding-left: 17px; display: flex; margin-bottom: 7px; }
.wtop .chk { width: 59px; }
.pct { flex: none; width: 65px; height: 18px; font-size: 11px; font-weight: 700; }
.wside { display: flex; flex-direction: column; gap: 2px; padding-bottom: 1px; }
.wl { align-items: flex-end; }
.wbox { width: 86px; height: 86px; }
.wbottom { grid-column: 2 / 4; padding-left: 17px; margin: 8px 0 15px; }
.wcenter { grid-column: 1 / 4; padding-left: 129px; display: flex; flex-direction: column; gap: 9px; }

.status { flex: none; height: 23px; display: flex; align-items: center; gap: 12px; padding: 4px 11px 0 10px; color: #707070; }
.ver { color: #fd7d1f; }
.watermark { position: absolute; right: 10px; bottom: 10px; font-size: 16px; line-height: 18px; color: rgba(255, 255, 255, .7); }
.marks { position: absolute; left: 0; top: 0; width: 100%; height: 100%; pointer-events: none; fill: #ff2010; }
.marks text { font-size: 21px; }
```
